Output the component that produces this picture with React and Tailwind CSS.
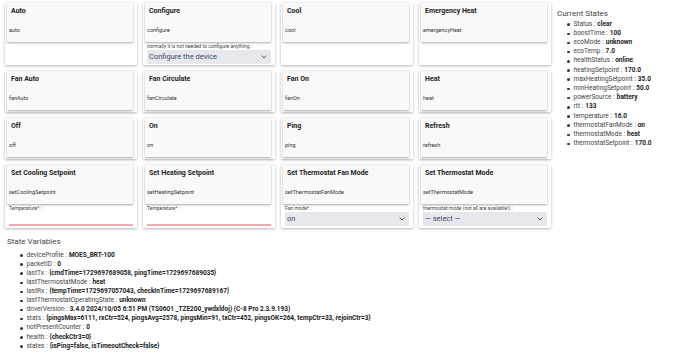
import React from "react";

const Chev = () => (
  <svg width="6" height="4" viewBox="0 0 6 4" className="shrink-0">
    <path d="M0.6 0.6 L3 3 L5.4 0.6" fill="none" stroke="#555" strokeWidth="1" />
  </svg>
);

function Inner({ title, sub }) {
  return (
    <div className="h-[39px] ml-[2px] mr-[4px] bg-[#f9f9f9] shadow-[0_1px_2px_rgba(0,0,0,0.35)] flex flex-col">
      <div className="pl-[4px] pt-[4px] text-[7px] leading-[9px] font-bold text-[#222]">{title}</div>
      <div className="pl-[2px] mt-[11px] text-[5.5px] leading-[7px] text-[#333]">{sub}</div>
    </div>
  );
}

function Card({ title, sub, children }) {
  return (
    <div className="bg-white shadow-[0_1px_3px_rgba(0,0,0,0.3)] rounded-[1px] flex flex-col">
      <Inner title={title} sub={sub} />
      {children}
    </div>
  );
}

function Sel({ text }) {
  return (
    <div className="mx-[4px] h-[14px] bg-[#e7e8ec] rounded-[1px] flex items-center justify-between pl-[2px] pr-[4px]">
      <span className="text-[#3b4a6b] leading-[10px] text-[7.5px]">{text}</span>
      <Chev />
    </div>
  );
}

function Label({ children }) {
  return <div className="pl-[4px] text-[5px] leading-[6px] text-[#444]">{children}</div>;
}

const current = [
  ["Status", "clear"],
  ["boostTime", "100"],
  ["ecoMode", "unknown"],
  ["ecoTemp", "7.0"],
  ["healthStatus", "online"],
  ["heatingSetpoint", "170.0"],
  ["maxHeatingSetpoint", "35.0"],
  ["minHeatingSetpoint", "50.0"],
  ["powerSource", "battery"],
  ["rtt", "133"],
  ["temperature", "16.0"],
  ["thermostatFanMode", "on"],
  ["thermostatMode", "heat"],
  ["thermostatSetpoint", "170.0"],
];

const vars = [
  ["deviceProfile", "MOES_BRT-100"],
  ["packetID", "0"],
  ["lastTx", "{cmdTime=1729697689058, pingTime=1729697689035}"],
  ["lastThermostatMode", "heat"],
  ["lastRx", "{tempTime=1729697057043, checkInTime=1729697689167}"],
  ["lastThermostatOperatingState", "unknown"],
  ["driverVersion", "3.4.0 2024/10/05 6:51 PM (TS0601 _TZE200_ywdxldoj) (C-8 Pro 2.3.9.193)"],
  ["stats", "{pingsMax=6111, rxCtr=524, pingsAvg=2578, pingsMin=91, txCtr=452, pingsOK=264, tempCtr=33, rejoinCtr=3}"],
  ["notPresentCounter", "0"],
  ["health", "{checkCtr3=0}"],
  ["states", "{isPing=false, isTimeoutCheck=false}"],
];

function Item({ k, v, lh }) {
  return (
    <li className={"flex items-center whitespace-nowrap " + lh}>
      <span className="w-[2.5px] h-[2.5px] rounded-full bg-[#333] mr-[4px] shrink-0" />
      <span>{k} : </span>
      <span className="font-bold ml-[2px] text-[#222]">{v}</span>
    </li>
  );
}

export default function App() {
  return (
    <div className="w-[690px] h-[355px] bg-white overflow-hidden text-[#333]" style={{ fontFamily: "Roboto, 'Liberation Sans', sans-serif" }}>
      <div className="flex">
        <div className="pl-[5px] pt-[3px] w-[552px] shrink-0">
          <div className="grid grid-cols-[132px_132px_132px_132px] gap-x-[6px] gap-y-[6px] grid-rows-[62px_41px_41px_63px]">
            <Card title="Auto" sub="auto" />
            <Card title="Configure" sub="configure">
              <div className="mt-[1px]"><Label>normally it is not needed to configure anything :</Label></div>
              <div className="mt-[1px]"><Sel text="Configure the device" /></div>
            </Card>
            <Card title="Cool" sub="cool" />
            <Card title="Emergency Heat" sub="emergencyHeat" />

            <Card title="Fan Auto" sub="fanAuto" />
            <Card title="Fan Circulate" sub="fanCirculate" />
            <Card title="Fan On" sub="fanOn" />
            <Card title="Heat" sub="heat" />

            <Card title="Off" sub="off" />
            <Card title="On" sub="on" />
            <Card title="Ping" sub="ping" />
            <Card title="Refresh" sub="refresh" />

            <Card title="Set Cooling Setpoint" sub="setCoolingSetpoint">
              <div className="mt-[1px]"><Label>Temperature* :</Label></div>
              <div className="mx-[4px] mt-[13px] h-[2px] bg-[#f2a9b0]" />
            </Card>
            <Card title="Set Heating Setpoint" sub="setHeatingSetpoint">
              <div className="mt-[1px]"><Label>Temperature* :</Label></div>
              <div className="mx-[4px] mt-[13px] h-[2px] bg-[#f2a9b0]" />
            </Card>
            <Card title="Set Thermostat Fan Mode" sub="setThermostatFanMode">
              <div className="mt-[1px]"><Label>Fan mode* :</Label></div>
              <div className="mt-[1px]"><Sel text="on" /></div>
            </Card>
            <Card title="Set Thermostat Mode" sub="setThermostatMode">
              <div className="mt-[1px]"><Label>thermostat mode (not all are available!) :</Label></div>
              <div className="mt-[1px]"><Sel text="— select —" /></div>
            </Card>
          </div>
        </div>
        <div className="pl-[5px] pt-[9px]">
          <div className="text-[8px] leading-[10px] text-[#444]">Current States</div>
          <ul className="pl-[10px] mt-[1px] text-[6.5px] text-[#444]">
            {current.map(([k, v]) => (
              <Item key={k} k={k} v={v} lh="h-[9.2px]" />
            ))}
          </ul>
        </div>
      </div>
      <div className="pl-[7px] mt-[9px]">
        <div className="text-[8px] leading-[10px] text-[#444]">State Variables</div>
        <ul className="pl-[13px] mt-[4px] text-[6.5px] text-[#444]">
          {vars.map(([k, v]) => (
            <Item key={k} k={k} v={v} lh="h-[9.1px]" />
          ))}
        </ul>
      </div>
    </div>
  );
}
